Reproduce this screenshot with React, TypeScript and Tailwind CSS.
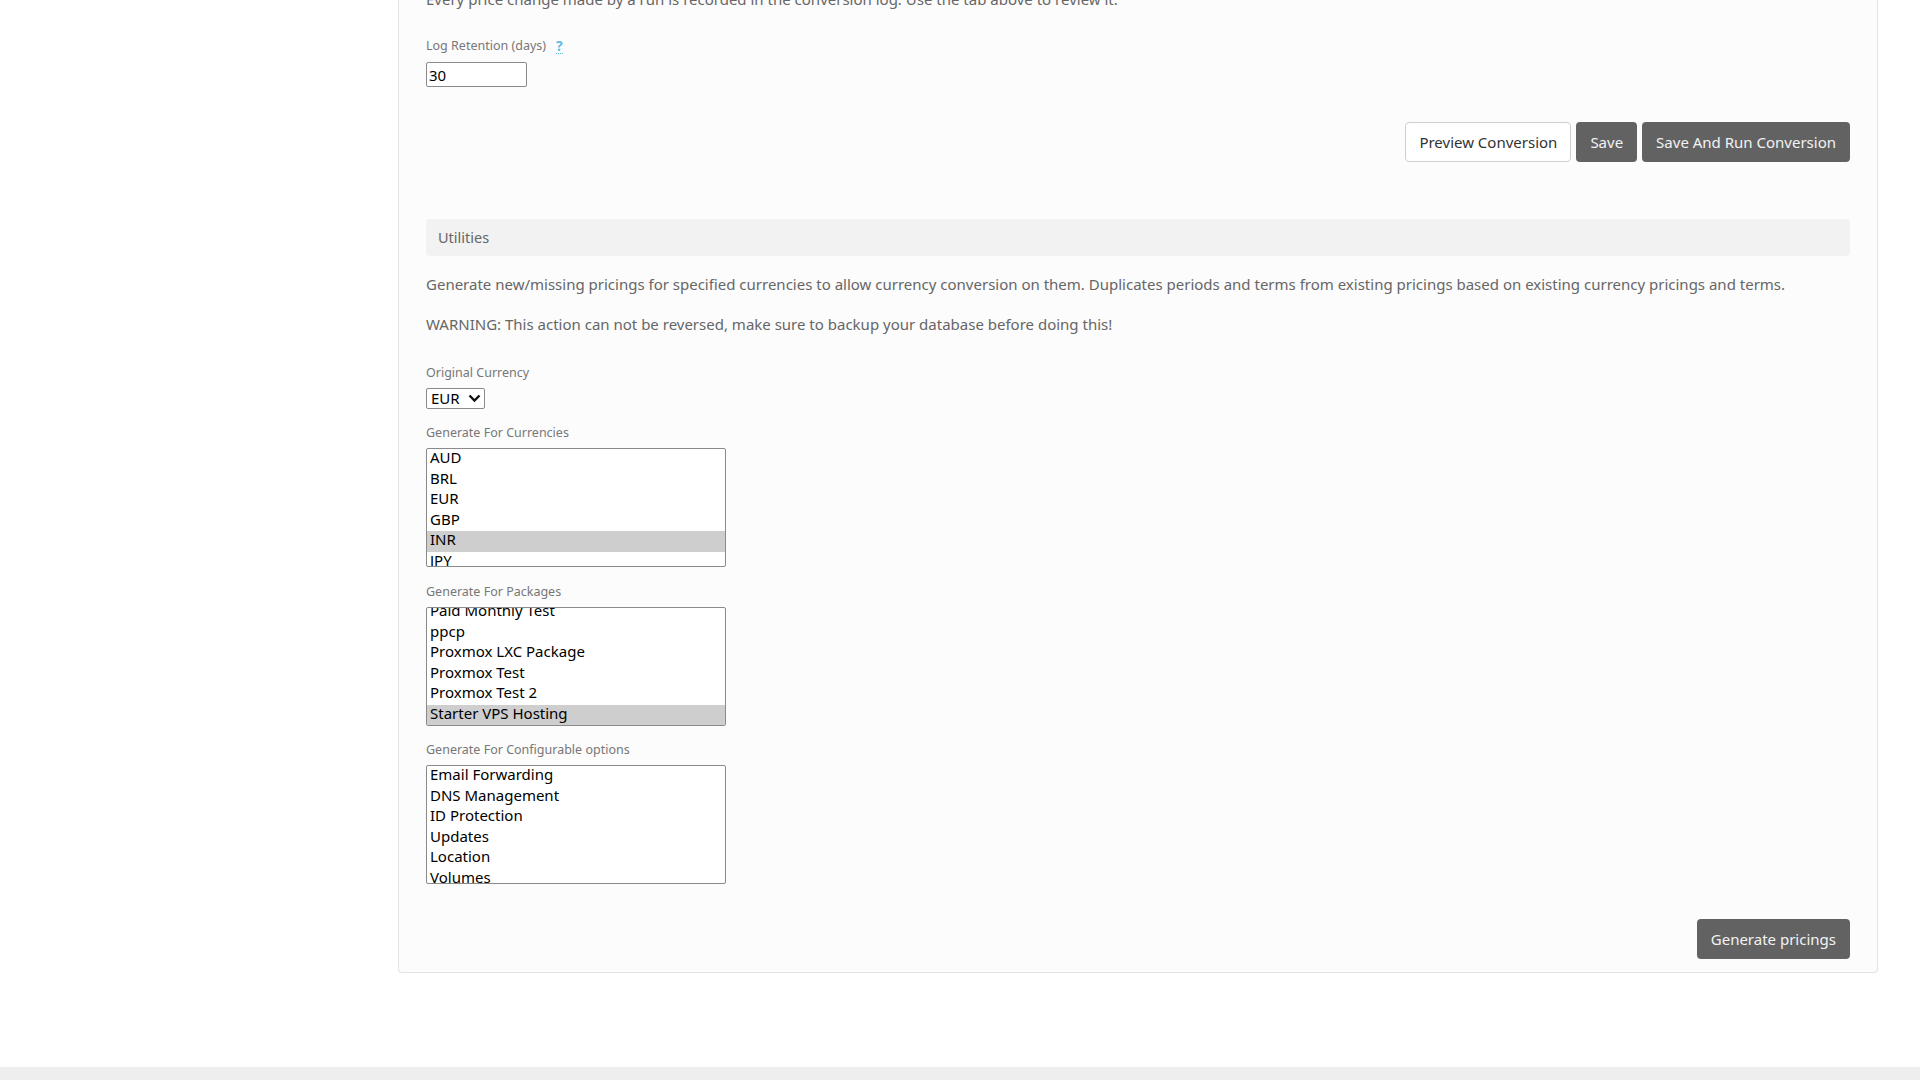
import React from 'react';

const currencies = ['AUD', 'BRL', 'EUR', 'GBP', 'INR', 'JPY', 'USD', 'ZAR'];
const packages = [
  'Basic Hosting',
  'Business Hosting',
  'Domain Only',
  'Paid Monthly Test',
  'ppcp',
  'Proxmox LXC Package',
  'Proxmox Test',
  'Proxmox Test 2',
  'Starter VPS Hosting',
];
const configOptions = [
  'Email Forwarding',
  'DNS Management',
  'ID Protection',
  'Updates',
  'Location',
  'Volumes',
  'Backups',
  'Bandwidth',
];

interface ListBoxProps {
  items: string[];
  selected: string;
  // packages list is scrolled to the bottom in the screenshot
  alignEnd?: boolean;
}

const ListBox = ({ items, selected, alignEnd }: ListBoxProps) => {
  return (
    <div
      className={
        'mt-[6px] w-[300px] h-[119px] border border-[#8a8a8a] rounded-[2px] bg-white overflow-hidden flex flex-col ' +
        (alignEnd ? 'justify-end' : 'justify-start')
      }
    >
      {items.map((item) => (
        <div
          key={item}
          className={
            'shrink-0 h-[20.5px] leading-[16px] px-[3px] text-[15px] text-black whitespace-nowrap ' +
            (item === selected ? 'bg-[#cecece]' : '')
          }
        >
          {item}
        </div>
      ))}
    </div>
  );
};

const Label = ({ children, className }: { children: React.ReactNode; className?: string }) => (
  <div className={'text-[12.5px] leading-[18px] text-[#777] ' + (className ?? '')}>{children}</div>
);

export default function App() {
  return (
    <div className="min-h-screen bg-white flex flex-col overflow-hidden font-['Noto_Sans',sans-serif]">
      <div className="flex">
        {/* サイドバー領域（空） */}
        <div className="w-[398px] shrink-0" />

        <div className="w-[1480px] shrink-0 bg-[#fcfcfc] border border-t-0 border-[#e3e3e3] rounded-b-[4px] px-[27px] pb-[13px]">
          <p className="-mt-[11px] text-[15px] leading-[20px] text-[#666]">
            Every price change made by a run is recorded in the conversion log. Use the tab above to review it.
          </p>

          <Label className="mt-[28px] flex items-center gap-[10px]">
            <span>Log Retention (days)</span>
            <span className="text-[14px] font-bold text-[#5bbde4] leading-[14px] border-b border-dotted border-[#5bbde4]">?</span>
          </Label>
          <input
            defaultValue="30"
            className="mt-[7px] block w-[101px] h-[25px] border border-[#8a8a8a] rounded-[2px] bg-white px-[2px] text-[15px] text-black outline-none"
          />

          <div className="mt-[35px] flex justify-end gap-[5px]">
            <button className="h-[40px] px-[13px] rounded-[4px] border border-[#cfcfcf] bg-white text-[15px] text-[#333]">
              Preview Conversion
            </button>
            <button className="h-[40px] px-[14px] rounded-[4px] bg-[#626262] text-[15px] text-[#f2f2f2]">
              Save
            </button>
            <button className="h-[40px] px-[14px] rounded-[4px] bg-[#626262] text-[15px] text-[#f2f2f2]">
              Save And Run Conversion
            </button>
          </div>

          <div className="mt-[57px] h-[37px] flex items-center px-[12px] rounded-[4px] bg-[#f2f2f2] text-[14.5px] text-[#666]">
            Utilities
          </div>

          <p className="mt-[18px] text-[15px] leading-[20px] text-[#666]">
            Generate new/missing pricings for specified currencies to allow currency conversion on them. Duplicates periods and terms from existing pricings based on existing currency pricings and terms.
          </p>
          <p className="mt-[20px] text-[15px] leading-[20px] text-[#666]">
            WARNING: This action can not be reversed, make sure to backup your database before doing this!
          </p>

          <Label className="mt-[30px]">Original Currency</Label>
          <div className="mt-[6px] w-[59px] h-[21px] flex items-center justify-between border border-[#8a8a8a] rounded-[2px] bg-white pl-[4px] pr-[3px] text-[15px] text-black">
            <span className="leading-[19px]">EUR</span>
            <svg width="13" height="9" viewBox="0 0 13 9">
              <path d="M1.5 1.5 L6.5 6.5 L11.5 1.5" fill="none" stroke="#111" strokeWidth="2.4" />
            </svg>
          </div>

          <Label className="mt-[15px]">Generate For Currencies</Label>
          <ListBox items={currencies} selected="INR" />

          <Label className="mt-[16px]">Generate For Packages</Label>
          <ListBox items={packages} selected="Starter VPS Hosting" alignEnd />

          <Label className="mt-[15px]">Generate For Configurable options</Label>
          <ListBox items={configOptions} selected="" />

          <div className="mt-[35px] flex justify-end">
            <button className="h-[40px] px-[14px] rounded-[4px] bg-[#626262] text-[15px] text-[#f2f2f2]">
              Generate pricings
            </button>
          </div>
        </div>
      </div>

      {/* フッター */}
      <div className="mt-[94px] h-[60px] bg-[#eeeeee]" />
    </div>
  );
}
